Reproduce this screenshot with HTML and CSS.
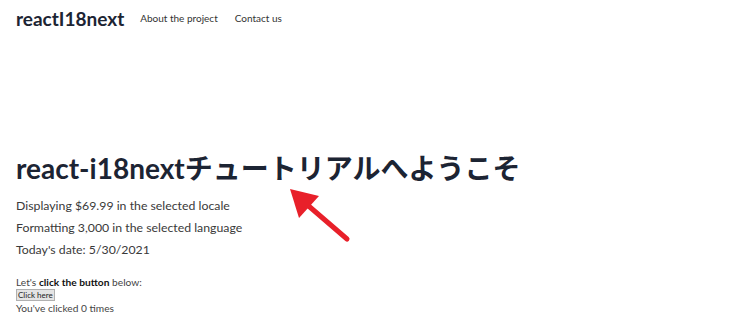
FILE: index.html
```html
<!DOCTYPE html>
<html lang="en">
<head>
<meta charset="utf-8">
<title>reactI18next</title>
<link rel="stylesheet" href="styles.css">
</head>
<body>
<header class="navbar">
  <span class="brand">reactI18next</span>
  <nav class="nav">
    <a class="nav-link" href="#">About the project</a>
    <a class="nav-link" href="#">Contact us</a>
  </nav>
</header>
<main class="content">
  <h1 class="title">react-i18nextチュートリアルへようこそ</h1>
  <p class="line">Displaying $69.99 in the selected locale</p>
  <p class="line">Formatting 3,000 in the selected language</p>
  <p class="line">Today's date: 5/30/2021</p>
  <div class="small">
    <div>Let's <strong>click the button</strong> below:</div>
    <button class="btn">Click here</button>
    <div>You've clicked 0 times</div>
  </div>
</main>
<svg class="arrow" width="80" height="70" viewBox="0 0 80 70">
  <line x1="65" y1="56" x2="22" y2="19" stroke="#e8202a" stroke-width="5" stroke-linecap="round"/>
  <polygon points="8,6 37,13 17,35" fill="#e8202a"/>
</svg>
</body>
</html>
```
FILE: styles.css
```css
html, body { margin: 0; padding: 0; background: #fff; }
body {
  font-family: Lato, "Noto Sans CJK JP", sans-serif;
  color: #333;
  width: 730px;
  height: 327px;
  overflow: hidden;
  position: relative;
}
.navbar {
  display: flex;
  align-items: center;
  height: 36px;
  padding: 0 16px;
  gap: 16px;
}
.brand {
  font-size: 19px;
  font-weight: 700;
  color: #1c2433;
}
.nav { display: flex; gap: 17px; }
.nav-link {
  font-size: 10px;
  color: #333;
  text-decoration: none;
}
.content { padding: 0 16px; }
.title {
  margin: 112px 0 0;
  font-size: 28px;
  line-height: 40px;
  font-weight: 700;
  color: #1c2433;
}
.line {
  margin: 0;
  font-size: 12.3px;
  line-height: 22px;
  color: #3a3a3a;
}
.line:first-of-type { margin-top: 7px; }
.small {
  margin-top: 14px;
  font-size: 10.2px;
  line-height: 14px;
  color: #444;
}
.small strong { color: #111; }
.btn {
  font-family: Lato, sans-serif;
  font-size: 8px;
  padding: 0 1px;
  height: 12px;
  line-height: 10px;
  border: 1px solid #b0b0b0;
  background: #e4e4e4;
  color: #222;
  display: block;
  margin: 0;
}
.arrow {
  position: absolute;
  left: 282px;
  top: 183px;
}
```
